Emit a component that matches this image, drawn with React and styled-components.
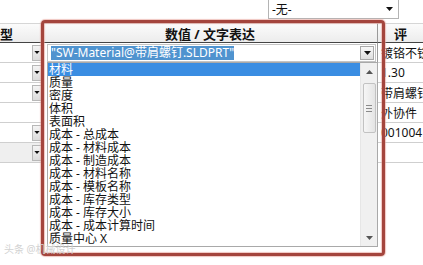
import React from "react";
import styled, { createGlobalStyle } from "styled-components";

const GlobalStyle = createGlobalStyle`
  html, body {
    margin: 0;
    padding: 0;
    background: #fff;
    overflow: hidden;
  }
  body {
    font-family: "Noto Sans", "Noto Sans CJK SC", sans-serif;
    color: #111;
  }
`;

const listItems = [
  "材料",
  "质量",
  "密度",
  "体积",
  "表面积",
  "成本 - 总成本",
  "成本 - 材料成本",
  "成本 - 制造成本",
  "成本 - 材料名称",
  "成本 - 模板名称",
  "成本 - 库存类型",
  "成本 - 库存大小",
  "成本 - 成本计算时间",
  "质量中心 X",
];

const rows = [
  { button: true, value: "镀铬不锈钢" },
  { button: true, value: "1.30" },
  { button: true, value: "带肩螺钉" },
  { button: false, value: "外协件" },
  { button: true, value: "001004" },
  { button: true, value: "", grey: true },
];

function Caret({ size = 7 }) {
  return (
    <svg width={size} height={size - 3} viewBox="0 0 7 4">
      <path d="M0 0 H7 L3.5 4 Z" fill="#111" />
    </svg>
  );
}

function App() {
  return (
    <Page>
      <GlobalStyle />
      <TopBar>
        <NoneSelect>
          <span>-无-</span>
          <Caret />
        </NoneSelect>
      </TopBar>

      <Table>
        <HeadCell $align="flex-start">型</HeadCell>
        <HeadCell $align="center">数值 / 文字表达</HeadCell>
        <HeadCell $align="center" $last>评</HeadCell>

        {rows.map((row, i) => (
          <React.Fragment key={i}>
            <LeftCell $grey={row.grey}>
              {row.button && (
                <ArrowButton>
                  <Caret size={6} />
                </ArrowButton>
              )}
            </LeftCell>
            <MidCell>
              {i === 0 && (
                <Combo>
                  <Selected>"SW-Material@带肩螺钉.SLDPRT"</Selected>
                  <ComboButton>
                    <Caret />
                  </ComboButton>
                </Combo>
              )}
            </MidCell>
            <RightCell>{row.value}</RightCell>
          </React.Fragment>
        ))}
      </Table>

      <DropList>
        <Items>
          {listItems.map((item, i) => (
            <Item key={item} $active={i === 0}>
              {item}
            </Item>
          ))}
        </Items>
        <ScrollBar>
          <ScrollArrow>
            <svg width="7" height="4" viewBox="0 0 7 4">
              <path d="M0 4 H7 L3.5 0 Z" fill="#555" />
            </svg>
          </ScrollArrow>
          <Thumb>
            <Grip />
          </Thumb>
          <Spacer />
          <ScrollArrow>
            <svg width="7" height="4" viewBox="0 0 7 4">
              <path d="M0 0 H7 L3.5 4 Z" fill="#555" />
            </svg>
          </ScrollArrow>
        </ScrollBar>
      </DropList>

      <Frame />
      <Watermark>头条 @机械设计</Watermark>
    </Page>
  );
}

export default App;

const Page = styled.div`
  position: relative;
  width: 423px;
  height: 265px;
  overflow: hidden;
  background: #fff;
`;

const TopBar = styled.div`
  height: 23px;
  display: flex;
  justify-content: flex-end;
  padding-right: 24px;
  box-sizing: border-box;
`;

const NoneSelect = styled.div`
  width: 131px;
  height: 20px;
  margin-top: -1px;
  box-sizing: border-box;
  border: 1px solid #b4b4b4;
  display: flex;
  align-items: center;
  justify-content: space-between;
  padding: 0 5px 0 3px;
  font-size: 12px;
  background: #fff;
`;

const Table = styled.div`
  display: grid;
  grid-template-columns: 43px 335px 45px;
  grid-auto-rows: 20px;
`;

const HeadCell = styled.div`
  display: flex;
  align-items: center;
  justify-content: ${(p) => p.$align};
  font-size: 13px;
  font-weight: bold;
  background: linear-gradient(#fbfbfb, #ececec);
  border-top: 1px solid #d6d6d6;
  border-bottom: 1px solid #444;
  border-right: ${(p) => (p.$last ? "none" : "1px solid #9a9a9a")};
  box-sizing: border-box;
  white-space: nowrap;
  overflow: hidden;
`;

const LeftCell = styled.div`
  display: flex;
  align-items: center;
  justify-content: flex-end;
  padding-right: 1px;
  background: ${(p) => (p.$grey ? "#efefef" : "#fff")};
  border-bottom: 1px solid #cfcfcf;
  box-sizing: border-box;
`;

const ArrowButton = styled.div`
  width: 10px;
  height: 16px;
  display: flex;
  align-items: center;
  justify-content: center;
  background: linear-gradient(#f4f4f4, #dcdcdc);
  border: 1px solid #b8b8b8;
  box-sizing: border-box;
`;

const MidCell = styled.div`
  display: flex;
  align-items: center;
  padding: 0 1px 0 4px;
  border-right: 1px solid #9a9a9a;
  box-sizing: border-box;
  background: #fff;
`;

const Combo = styled.div`
  flex: 1;
  height: 18px;
  display: flex;
  align-items: center;
  justify-content: space-between;
  border: 1px solid #c4c4c4;
  box-sizing: border-box;
  padding: 0 1px 0 3px;
  background: #fff;
`;

const Selected = styled.span`
  font-size: 12px;
  line-height: 12px;
  padding: 1px 0;
  color: #fff;
  background: #4f93cf;
  white-space: nowrap;
`;

const ComboButton = styled.div`
  width: 14px;
  height: 14px;
  display: flex;
  align-items: center;
  justify-content: center;
  border: 1px solid #a8a8a8;
  background: linear-gradient(#f8f8f8, #dedede);
  box-sizing: border-box;
`;

const RightCell = styled.div`
  display: flex;
  align-items: center;
  padding-left: 3px;
  font-size: 12px;
  white-space: nowrap;
  overflow: hidden;
  border-bottom: 1px solid #cfcfcf;
  box-sizing: border-box;
`;

const DropList = styled.div`
  position: absolute;
  left: 47px;
  top: 62px;
  width: 331px;
  height: 185px;
  box-sizing: border-box;
  border: 1px solid #a9a9a9;
  background: #fff;
  display: flex;
`;

const Items = styled.div`
  flex: 1;
  display: flex;
  flex-direction: column;
`;

const Item = styled.div`
  height: 13px;
  line-height: 13px;
  font-size: 12px;
  padding-left: 1px;
  white-space: nowrap;
  color: ${(p) => (p.$active ? "#fff" : "#111")};
  background: ${(p) => (p.$active ? "#3a8de2" : "transparent")};
`;

const ScrollBar = styled.div`
  width: 16px;
  background: #f0f0f0;
  border-left: 1px solid #e6e6e6;
  display: flex;
  flex-direction: column;
  align-items: center;
`;

const ScrollArrow = styled.div`
  height: 17px;
  width: 100%;
  display: flex;
  align-items: center;
  justify-content: center;
`;

const Thumb = styled.div`
  width: 13px;
  height: 50px;
  margin-top: 3px;
  box-sizing: border-box;
  border: 1px solid #c2c2c2;
  border-radius: 2px;
  background: linear-gradient(90deg, #f6f6f6, #e4e4e4);
  display: flex;
  align-items: center;
  justify-content: center;
`;

const Grip = styled.div`
  width: 6px;
  height: 5px;
  border-top: 1px solid #8a8a8a;
  border-bottom: 1px solid #8a8a8a;
  position: relative;
  &::after {
    content: "";
    position: absolute;
    left: 0;
    right: 0;
    top: 2px;
    border-top: 1px solid #8a8a8a;
  }
`;

const Spacer = styled.div`
  flex: 1;
`;

const Frame = styled.div`
  position: absolute;
  left: 41px;
  top: 20px;
  width: 344px;
  height: 236px;
  box-sizing: border-box;
  border: 3px solid #a4453d;
  border-radius: 4px;
  box-shadow: 0 0 1px 1px rgba(230, 160, 150, 0.6),
    inset 0 0 1px 1px rgba(230, 160, 150, 0.6);
  pointer-events: none;
`;

const Watermark = styled.div`
  position: absolute;
  left: 4px;
  bottom: 9px;
  font-size: 10px;
  color: #d2d2d2;
  white-space: nowrap;
`;
